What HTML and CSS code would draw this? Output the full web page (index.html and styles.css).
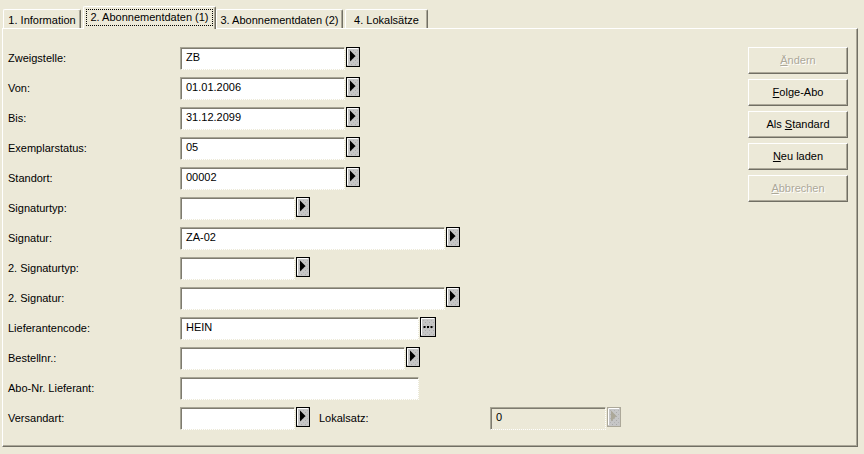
FILE: index.html
```html
<!DOCTYPE html>
<html lang="de">
<head>
<meta charset="utf-8">
<title>Abonnementdaten</title>
<link rel="stylesheet" href="styles.css">
</head>
<body>
<svg class="defs" width="0" height="0" aria-hidden="true">
  <defs>
    <pattern id="dots" width="4" height="4" patternUnits="userSpaceOnUse">
      <rect width="4" height="4" fill="#c6c6c6"/>
      <rect x="1" y="1" width="1" height="1" fill="#a9a9a9"/>
      <rect x="3" y="3" width="1" height="1" fill="#b3b3b3"/>
    </pattern>
  </defs>
</svg>

<div class="tabs">
  <div class="tab t1">1. Information</div>
  <div class="tab sel"><span class="focus">2. Abonnementdaten (1)</span></div>
  <div class="tab t3">3. Abonnementdaten (2)</div>
  <div class="tab t4">4. Lokalsätze</div>
</div>

<div class="panel">
  <div class="form">
    <div class="row"><span class="label">Zweigstelle:</span><div class="field w165">ZB</div><svg class="arrow" viewBox="0 0 14 20"><rect x="0.5" y="0.5" width="13" height="19" fill="url(#dots)" stroke="#000"/><path d="M1.5 18V1.5H12" stroke="#fff" fill="none"/><path d="M4 3.5L9.5 9L4 14.5Z" fill="#000"/></svg></div>
    <div class="row"><span class="label">Von:</span><div class="field w165">01.01.2006</div><svg class="arrow" viewBox="0 0 14 20"><rect x="0.5" y="0.5" width="13" height="19" fill="url(#dots)" stroke="#000"/><path d="M1.5 18V1.5H12" stroke="#fff" fill="none"/><path d="M4 3.5L9.5 9L4 14.5Z" fill="#000"/></svg></div>
    <div class="row"><span class="label">Bis:</span><div class="field w165">31.12.2099</div><svg class="arrow" viewBox="0 0 14 20"><rect x="0.5" y="0.5" width="13" height="19" fill="url(#dots)" stroke="#000"/><path d="M1.5 18V1.5H12" stroke="#fff" fill="none"/><path d="M4 3.5L9.5 9L4 14.5Z" fill="#000"/></svg></div>
    <div class="row"><span class="label">Exemplarstatus:</span><div class="field w165">05</div><svg class="arrow" viewBox="0 0 14 20"><rect x="0.5" y="0.5" width="13" height="19" fill="url(#dots)" stroke="#000"/><path d="M1.5 18V1.5H12" stroke="#fff" fill="none"/><path d="M4 3.5L9.5 9L4 14.5Z" fill="#000"/></svg></div>
    <div class="row"><span class="label">Standort:</span><div class="field w165">00002</div><svg class="arrow" viewBox="0 0 14 20"><rect x="0.5" y="0.5" width="13" height="19" fill="url(#dots)" stroke="#000"/><path d="M1.5 18V1.5H12" stroke="#fff" fill="none"/><path d="M4 3.5L9.5 9L4 14.5Z" fill="#000"/></svg></div>
    <div class="row"><span class="label">Signaturtyp:</span><div class="field w115"></div><svg class="arrow" viewBox="0 0 14 20"><rect x="0.5" y="0.5" width="13" height="19" fill="url(#dots)" stroke="#000"/><path d="M1.5 18V1.5H12" stroke="#fff" fill="none"/><path d="M4 3.5L9.5 9L4 14.5Z" fill="#000"/></svg></div>
    <div class="row"><span class="label">Signatur:</span><div class="field w265">ZA-02</div><svg class="arrow" viewBox="0 0 14 20"><rect x="0.5" y="0.5" width="13" height="19" fill="url(#dots)" stroke="#000"/><path d="M1.5 18V1.5H12" stroke="#fff" fill="none"/><path d="M4 3.5L9.5 9L4 14.5Z" fill="#000"/></svg></div>
    <div class="row"><span class="label">2. Signaturtyp:</span><div class="field w115"></div><svg class="arrow" viewBox="0 0 14 20"><rect x="0.5" y="0.5" width="13" height="19" fill="url(#dots)" stroke="#000"/><path d="M1.5 18V1.5H12" stroke="#fff" fill="none"/><path d="M4 3.5L9.5 9L4 14.5Z" fill="#000"/></svg></div>
    <div class="row"><span class="label">2. Signatur:</span><div class="field w265"></div><svg class="arrow" viewBox="0 0 14 20"><rect x="0.5" y="0.5" width="13" height="19" fill="url(#dots)" stroke="#000"/><path d="M1.5 18V1.5H12" stroke="#fff" fill="none"/><path d="M4 3.5L9.5 9L4 14.5Z" fill="#000"/></svg></div>
    <div class="row"><span class="label">Lieferantencode:</span><div class="field w239">HEIN</div><svg class="ellipsis" viewBox="0 0 16 20"><rect x="0.5" y="0.5" width="15" height="19" fill="url(#dots)" stroke="#000"/><path d="M1.5 18V1.5H14" stroke="#fff" fill="none"/><rect x="3.5" y="9" width="2" height="2" fill="#000"/><rect x="7" y="9" width="2" height="2" fill="#000"/><rect x="10.5" y="9" width="2" height="2" fill="#000"/></svg></div>
    <div class="row"><span class="label">Bestellnr.:</span><div class="field w225"></div><svg class="arrow" viewBox="0 0 14 20"><rect x="0.5" y="0.5" width="13" height="19" fill="url(#dots)" stroke="#000"/><path d="M1.5 18V1.5H12" stroke="#fff" fill="none"/><path d="M4 3.5L9.5 9L4 14.5Z" fill="#000"/></svg></div>
    <div class="row"><span class="label">Abo-Nr. Lieferant:</span><div class="field w239"></div></div>
    <div class="row"><span class="label">Versandart:</span><div class="field w115"></div><svg class="arrow" viewBox="0 0 14 20"><rect x="0.5" y="0.5" width="13" height="19" fill="url(#dots)" stroke="#000"/><path d="M1.5 18V1.5H12" stroke="#fff" fill="none"/><path d="M4 3.5L9.5 9L4 14.5Z" fill="#000"/></svg><span class="label label2">Lokalsatz:</span><div class="field disabled w116">0</div><svg class="arrow" viewBox="0 0 14 20"><rect x="0.5" y="0.5" width="13" height="19" fill="url(#dots)" stroke="#aca899"/><path d="M1.5 18V1.5H12" stroke="#fff" fill="none"/><path d="M4 3.5L9.5 9L4 14.5Z" fill="#aca899"/></svg></div>
  </div>
  <div class="actions">
    <div class="btn dis"><span><u>Ä</u>ndern</span></div>
    <div class="btn"><span><u>F</u>olge-Abo</span></div>
    <div class="btn"><span>Als <u>S</u>tandard</span></div>
    <div class="btn"><span><u>N</u>eu laden</span></div>
    <div class="btn dis"><span><u>A</u>bbrechen</span></div>
  </div>
</div>
</body>
</html>
```

FILE: styles.css
```css
html, body {
  margin: 0;
  padding: 0;
}
body {
  background: #ECE9D8;
  font: 11px "Liberation Sans", Arial, sans-serif;
  color: #000;
  width: 864px;
  height: 454px;
  overflow: hidden;
}
.defs {
  position: absolute;
  width: 0;
  height: 0;
}

/* Tabs */
.tabs {
  display: flex;
  align-items: flex-end;
  height: 28px;
  position: relative;
  z-index: 1;
}
.tab {
  box-sizing: border-box;
  height: 19px;
  border: 1px solid #fff;
  border-bottom: none;
  border-right-color: #716F64;
  box-shadow: inset -1px 0 0 #ACA899;
  border-radius: 2px 2px 0 0;
  background: #ECE9D8;
  display: flex;
  align-items: center;
  justify-content: center;
  white-space: nowrap;
  padding-top: 1px;
}
.t1 { margin-left: 3px; width: 78px; }
.sel {
  margin-left: 2px;
  width: 133px;
  height: 23px;
  margin-bottom: -1px;
  align-items: flex-start;
  padding: 3px 3px 0 3px;
}
.focus {
  display: block;
  flex: 1;
  height: 15px;
  line-height: 15px;
  text-align: center;
  outline: 1px dotted #000;
}
.t3 { width: 127px; }
.t4 { margin-left: 2px; width: 83px; }

/* Panel */
.panel {
  box-sizing: border-box;
  margin-left: 2px;
  width: 856px;
  height: 419px;
  border-top: 1px solid #fff;
  border-left: 1px solid #fff;
  border-right: 1px solid #716F64;
  border-bottom: 1px solid #716F64;
  box-shadow: inset -1px -1px 0 #ACA899;
  display: flex;
  padding: 18px 9px 0 5px;
}
.form {
  flex: 1;
  display: flex;
  flex-direction: column;
  gap: 7px;
}
.row {
  display: flex;
  align-items: center;
  height: 23px;
}
.label {
  flex: none;
  width: 172px;
  white-space: nowrap;
  padding-bottom: 1px;
}
.label2 {
  margin-left: 9px;
  width: 171px;
}
.field {
  flex: none;
  box-sizing: border-box;
  height: 23px;
  background: #fff;
  background-clip: padding-box;
  border-top: 1px solid #A7A595;
  border-left: 1px solid #A7A595;
  border-right: 1px dotted #fff;
  border-bottom: 1px dotted #fff;
  box-shadow: inset 1px 1px 0 #7E7B6F;
  padding: 0 4px 0 5px;
  line-height: 19px;
  white-space: nowrap;
}
.field.disabled {
  background: #ECE9D8;
}
.w115 { width: 115px; }
.w116 { width: 116px; }
.w165 { width: 165px; }
.w225 { width: 225px; }
.w239 { width: 239px; }
.w265 { width: 265px; }

.arrow {
  flex: none;
  align-self: flex-start;
  width: 14px;
  height: 20px;
  margin-left: 1px;
}
.ellipsis {
  flex: none;
  align-self: flex-start;
  width: 16px;
  height: 20px;
  margin-left: 1px;
}

/* Buttons */
.actions {
  flex: none;
  width: 100px;
  display: flex;
  flex-direction: column;
  gap: 5px;
}
.btn {
  box-sizing: border-box;
  width: 100px;
  height: 27px;
  border: 1px solid;
  border-color: #fff #716F64 #716F64 #fff;
  box-shadow: inset -1px -1px 0 #ACA899;
  display: flex;
  align-items: center;
  justify-content: center;
  padding-bottom: 1px;
}
.btn.dis {
  color: #ACA899;
  text-shadow: 1px 1px 0 #fff;
}
u {
  text-decoration: underline;
}
```
